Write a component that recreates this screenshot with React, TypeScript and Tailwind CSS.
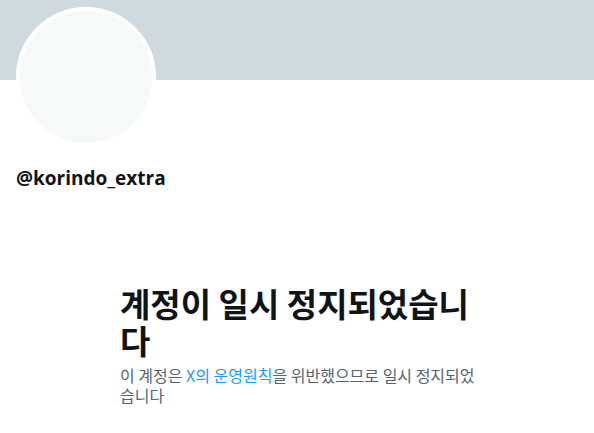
export default function App() {
  return (
    <div
      className="w-[594px] h-[433px] bg-white overflow-hidden"
      style={{ fontFamily: '"Open Sans", "Noto Sans CJK KR", sans-serif' }}
    >
      {/* Banner */}
      <div className="h-[80px] bg-[#cfd9de]" />

      {/* Avatar + handle */}
      <div className="px-4">
        <div className="-mt-[73px] w-[140px] h-[140px] rounded-full border-4 border-white bg-[#f7f9f9]" />
        <p className="mt-[19px] text-[19px] font-bold leading-6 text-[#0f1419]">@korindo_extra</p>
      </div>

      {/* Suspended notice */}
      <div
        className="mx-auto mt-[95px] w-[354px]"
        style={{ fontFamily: '"Noto Sans CJK KR", sans-serif' }}
      >
        <h2 className="text-[33px] font-bold leading-[37px] text-[#0f1419]">
          계정이 일시 정지되었습니다
        </h2>
        <p className="mt-[6px] w-[362px] text-[16px] leading-5 text-[#536471]">
          이 계정은 <span className="text-[#1d9bf0]">X의 운영원칙</span>을 위반했으므로 일시 정지되었습니다
        </p>
      </div>
    </div>
  )
}
